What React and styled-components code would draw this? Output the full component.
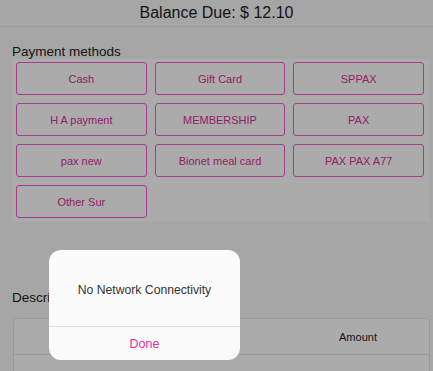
import React from 'react'
import styled, { createGlobalStyle } from 'styled-components'

const GlobalStyle = createGlobalStyle`
    html, body {
        margin: 0;
        padding: 0;
        background: #f8f8f8;
        font-family: "Liberation Sans", Arial, sans-serif;
        color: #222;
        overflow: hidden;
    }
`

const Page = styled.div`
    width: 433px;
    height: 371px;
    position: relative;
    overflow: hidden;
`

const Header = styled.div`
    height: 26px;
    line-height: 26px;
    text-align: center;
    font-size: 16px;
    border-bottom: 1px solid #e6e6e6;
`

const Section = styled.div`
    padding: 0 3px 0 12px;
    margin-top: ${props => props.top}px;
`

const Title = styled.div`
    font-size: 13.5px;
    line-height: 14px;
    height: 14px;
    margin-bottom: ${props => props.gap || 0}px;
`

const Panel = styled.div`
    background: #fff;
    padding: 3px 6px 4px 4px;
    display: grid;
    grid-template-columns: repeat(3, 1fr);
    grid-auto-rows: 33px;
    gap: 8px;
`

const MethodButton = styled.div`
    box-sizing: border-box;
    border: 1px solid #f35ccb;
    border-radius: 3px;
    color: #e02c9c;
    font-size: 11px;
    display: flex;
    align-items: center;
    justify-content: center;
    cursor: pointer;
`

const Table = styled.div`
    margin: 0 0 0 1px;
    border: 1px solid #e4e4e4;
    border-radius: 4px 4px 0 0;
    background: #fff;
`

const Row = styled.div`
    display: grid;
    grid-template-columns: 1fr 142px;
    height: ${props => props.h}px;
    border-bottom: 1px solid #e4e4e4;
`

const HeadCell = styled.div`
    display: flex;
    align-items: center;
    justify-content: center;
    font-size: 11px;
    color: #1e1e1e;
`

const Backdrop = styled.div`
    position: absolute;
    inset: 0;
    background: rgba(0, 0, 0, 0.33);
`

const Dialog = styled.div`
    position: absolute;
    left: 49px;
    top: 250px;
    width: 191px;
    height: 110px;
    background: #fbfbfb;
    border-radius: 12px;
    display: flex;
    flex-direction: column;
    overflow: hidden;
`

const Message = styled.div`
    height: 77px;
    display: flex;
    align-items: center;
    justify-content: center;
    padding-top: 3px;
    box-sizing: border-box;
    font-size: 12.2px;
    color: #333;
    border-bottom: 1px solid #dcdcdc;
`

const DoneButton = styled.div`
    flex: 1;
    display: flex;
    align-items: center;
    justify-content: center;
    font-size: 12.5px;
    color: #ec2f9c;
`

const methods = [
    'Cash', 'Gift Card', 'SPPAX',
    'H A payment', 'MEMBERSHIP', 'PAX',
    'pax new', 'Bionet meal card', 'PAX PAX A77',
    'Other Sur'
]

export default function App() {
    return (
        <Page>
            <GlobalStyle />
            <Header>Balance Due: $ 12.10</Header>

            <Section top={18}>
                <Title>Payment methods</Title>
                <Panel>
                    {methods.map(m => (
                        <MethodButton key={m}>{m}</MethodButton>
                    ))}
                </Panel>
            </Section>

            <Section top={69}>
                <Title gap={13}>Description</Title>
                <Table>
                    <Row h={35}>
                        <HeadCell />
                        <HeadCell>Amount</HeadCell>
                    </Row>
                    <Row h={36}>
                        <HeadCell />
                        <HeadCell />
                    </Row>
                </Table>
            </Section>

            <Backdrop />
            <Dialog>
                <Message>No Network Connectivity</Message>
                <DoneButton>Done</DoneButton>
            </Dialog>
        </Page>
    )
}
